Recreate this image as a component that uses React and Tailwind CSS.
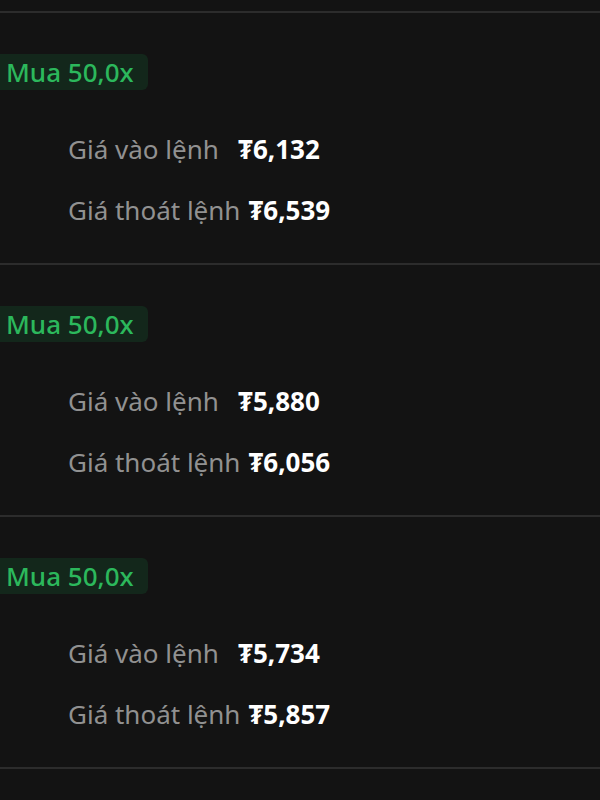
const TRADES = [
  { side: 'Mua', lev: '50,0x', entry: '6,132', exit: '6,539' },
  { side: 'Mua', lev: '50,0x', entry: '5,880', exit: '6,056' },
  { side: 'Mua', lev: '50,0x', entry: '5,734', exit: '5,857' },
]

function Row({ label, value }) {
  return (
    <div className="flex h-[61px] items-center pl-[68px]">
      <span className="min-w-[170px] pr-2 text-[#919191]">{label}</span>
      <span className="font-bold text-white">₮{value}</span>
    </div>
  )
}

function TradeItem({ t }) {
  return (
    <div className="border-t-2 border-[#2c2c2c] pt-[41px] pb-[23px]">
      <div className="flex">
        <span className="flex h-9 items-center rounded-r-md bg-[#13271b] pl-[6px] pr-[14px] text-[26px] font-medium text-[#2cb85c]">
          {t.side} {t.lev}
        </span>
      </div>
      <div className="mt-[28px]">
        <Row label="Giá vào lệnh" value={t.entry} />
        <Row label="Giá thoát lệnh" value={t.exit} />
      </div>
    </div>
  )
}

export default function App() {
  return (
    <div
      className="h-[800px] w-[600px] overflow-hidden bg-[#131313] pt-[11px] text-[26px] leading-none"
      style={{ fontFamily: '"Noto Sans", "Open Sans", sans-serif' }}
    >
      {TRADES.map((t, i) => (
        <TradeItem key={i} t={t} />
      ))}
      <div className="border-t-2 border-[#2c2c2c]" />
    </div>
  )
}
